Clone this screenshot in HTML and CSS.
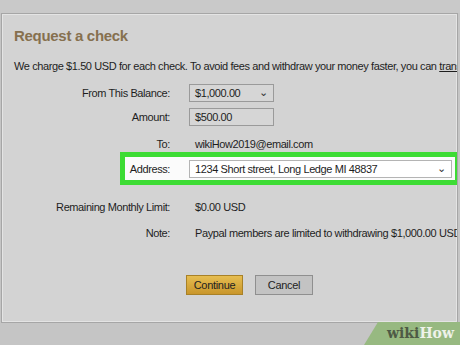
FILE: index.html
```html
<!DOCTYPE html>
<html lang="en">
<head>
    <meta charset="UTF-8">
    <meta name="viewport" content="width=device-width, initial-scale=1.0">
    <title>Request a check</title>
    <link rel="stylesheet" href="styles.css">
</head>
<body>

    <div class="top-band"></div>

    <div class="panel">
        <h1 class="title">Request a check</h1>
        <p class="intro">We charge $1.50 USD for each check. To avoid fees and withdraw your money faster, you can <u>transfer</u></p>

        <!-- Form rows -->
        <div class="row row-balance">
            <span class="label">From This Balance:</span>
            <div class="box box-select">
                <span>$1,000.00</span>
                <span class="chevron">&#8964;</span>
            </div>
        </div>

        <div class="row row-amount">
            <span class="label">Amount:</span>
            <div class="box">$500.00</div>
        </div>

        <div class="row row-to">
            <span class="label">To:</span>
            <span class="value">wikiHow2019@email.com</span>
        </div>

        <!-- Highlighted address -->
        <div class="highlight">
            <div class="row">
                <span class="label label-address">Address:</span>
                <div class="box box-select box-address">
                    <span>1234 Short street, Long Ledge MI 48837</span>
                    <span class="chevron">&#8964;</span>
                </div>
            </div>
        </div>

        <div class="row row-limit">
            <span class="label">Remaining Monthly Limit:</span>
            <span class="value">$0.00 USD</span>
        </div>

        <div class="row row-note">
            <span class="label">Note:</span>
            <span class="value">Paypal members are limited to withdrawing $1,000.00 USD</span>
        </div>

        <div class="buttons">
            <button class="btn btn-continue">Continue</button>
            <button class="btn btn-cancel">Cancel</button>
        </div>
    </div>

    <div class="watermark"><span class="wiki">wiki</span><span class="how">How</span></div>

</body>
</html>
```

FILE: styles.css
```css
html, body {
    margin: 0;
    padding: 0;
}
body {
    width: 460px;
    height: 345px;
    overflow: hidden;
    position: relative;
    background-color: #c5c5c5;
    font-family: "Liberation Sans", Arial, sans-serif;
    color: #1e1e1e;
    white-space: nowrap;
}
.top-band {
    height: 13px;
    background-color: #c9c9c9;
}
.panel {
    margin-left: 1px;
    width: 455px;
    height: 308px;
    background-color: #d3d3d3;
    border: 1px solid #a6a6a6;
    box-shadow: inset 1px 1px 0 #e4e4e4, inset -1px -1px 0 #e4e4e4;
    overflow: hidden;
}
.title {
    margin: 12px 0 0 12px;
    font-size: 15px;
    letter-spacing: -0.3px;
    font-weight: bold;
    color: #86704f;
    line-height: 20px;
}
.intro {
    margin: 13px 0 0 12px;
    font-size: 11px;
    letter-spacing: -0.4px;
    line-height: 14px;
}
.row {
    display: flex;
    align-items: center;
    height: 20px;
    font-size: 11px;
    letter-spacing: -0.4px;
}
.label {
    flex-shrink: 0;
    width: 168px;
    text-align: right;
    margin-right: 19px;
}
.value {
    padding-left: 6px;
}
.row-balance {
    margin-top: 10px;
}
.row-amount {
    margin-top: 4px;
}
.row-to {
    margin-top: 9px;
    height: 16px;
}
.row-limit {
    margin-top: 12px;
}
.row-note {
    margin-top: 6px;
}
.box {
    box-sizing: border-box;
    flex-shrink: 0;
    width: 85px;
    height: 18px;
    padding: 0 5px;
    display: flex;
    align-items: center;
    justify-content: space-between;
    background-color: #d6d6d6;
    border: 1px solid #9a9a9a;
}
.chevron {
    font-size: 11px;
    line-height: 8px;
    height: 10px;
    color: #333;
}
.highlight {
    margin-left: 118px;
    width: 330px;
    height: 23px;
    border: 5px solid #3ddc34;
    background-color: #fbfbfb;
    display: flex;
    align-items: center;
}
.label-address {
    width: 45px;
}
.box-address {
    width: 263px;
    background-color: #ffffff;
    border-color: #b4b4b4;
}
.buttons {
    display: flex;
    gap: 12px;
    margin: 32px 0 0 184px;
}
.btn {
    box-sizing: border-box;
    height: 20px;
    padding: 0;
    font-family: "Liberation Sans", Arial, sans-serif;
    font-size: 11px;
    letter-spacing: -0.3px;
    color: #222;
}
.btn-continue {
    width: 57px;
    background: linear-gradient(#e6bd50, #c9962b);
    border: 1px solid #a88127;
}
.btn-cancel {
    width: 58px;
    background-color: #c3c3c3;
    border: 1px solid #8f8f8f;
}
.watermark {
    position: absolute;
    right: 0;
    bottom: 0;
    width: 96px;
    height: 23px;
    padding-left: 12px;
    background-color: #97b981;
    clip-path: polygon(14px 0, 100% 0, 100% 100%, 0 100%);
    font-family: "DejaVu Serif", serif;
    font-weight: bold;
    font-size: 14px;
    line-height: 23px;
    text-align: right;
    box-sizing: border-box;
    padding-right: 6px;
}
.wiki {
    color: #4e5a45;
}
.how {
    color: #eef2ea;
}
```
